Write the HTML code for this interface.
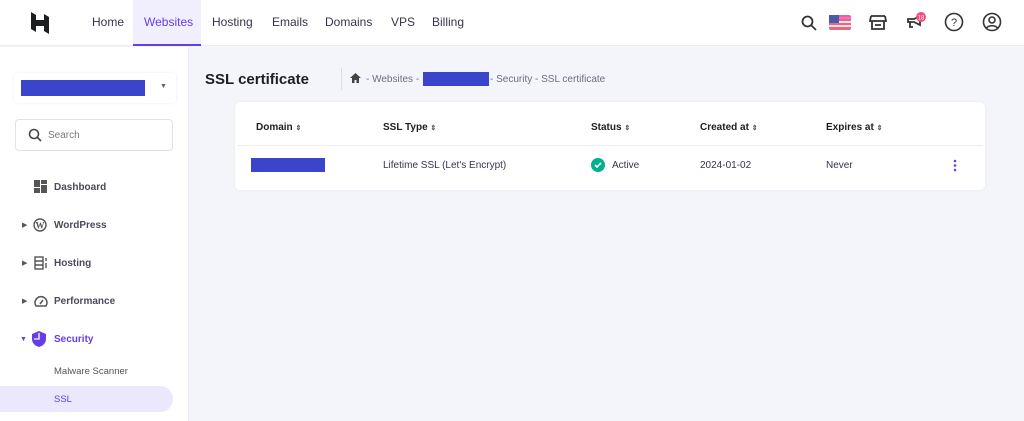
<!DOCTYPE html>
<html><head><style>
*{margin:0;padding:0;box-sizing:border-box}
body{width:1024px;height:421px;overflow:hidden;background:#f4f4fb;font-family:"Liberation Sans",sans-serif;position:relative;color:#2f1c6a}
.abs{position:absolute}
.top{left:0;top:0;width:1024px;height:46px;background:#fff;border-bottom:1px solid #ececf3}
.nav{top:0;height:46px;line-height:45px;font-size:12px;color:#36344d}
.side{left:0;top:47px;width:189px;height:374px;background:#fff;border-right:1px solid #ececf3}
.blue{background:#3b45cc}
.si{font-size:10px;font-weight:bold;color:#4a4a5a}
.th{font-size:10px;font-weight:bold;color:#1d1e20;top:122px}
.td{font-size:10px;color:#36344d;top:160px}
.arr{font-size:7px;color:#555}
</style></head><body>
<div class="abs top"></div>
<div class="abs" style="left:133px;top:0;width:68px;height:46px;background:#f1effd;border-bottom:2px solid #673de6"></div>
<svg class="abs" style="left:30px;top:12px" width="20" height="22" viewBox="0 0 20 22"><path d="M1 0l5 3v5h8V2l5 3v7H6v-1H1zM1 10h13v1h5v11l-5-3v-5H6v6l-5-3z" fill="#1d1e20"/></svg>
<div class="abs nav" style="left:92px">Home</div>
<div class="abs nav" style="left:144px;color:#673de6">Websites</div>
<div class="abs nav" style="left:212px">Hosting</div>
<div class="abs nav" style="left:272px">Emails</div>
<div class="abs nav" style="left:325px">Domains</div>
<div class="abs nav" style="left:391px">VPS</div>
<div class="abs nav" style="left:432px">Billing</div>
<svg class="abs" style="left:801px;top:15px" width="16" height="16"><circle cx="6.5" cy="6.5" r="5" fill="none" stroke="#333" stroke-width="1.8"/><path d="M10 10l5 5" stroke="#333" stroke-width="1.8"/></svg>
<svg class="abs" style="left:829px;top:15px" width="22" height="15"><rect width="22" height="15" rx="2" fill="#e46b7a"/><rect y="2" width="22" height="2" fill="#f6d"/><rect y="6" width="22" height="2" fill="#fde"/><rect y="10" width="22" height="2" fill="#fde"/><rect width="10" height="8" fill="#4d5aa8"/></svg>
<svg class="abs" style="left:869px;top:13px" width="18" height="18" fill="none" stroke="#333" stroke-width="1.8"><path d="M2 3h14M2 3l-1 5h16l-1-5M3 8v8h12V8M6 12h6"/></svg>
<svg class="abs" style="left:906px;top:12px" width="22" height="20"><path d="M2 7h6l6-3v9l-6-3H2zM4 10v5h3" fill="none" stroke="#333" stroke-width="1.8"/><circle cx="15" cy="5" r="5" fill="#f04b7d"/><text x="15" y="7.5" font-size="6" fill="#fff" text-anchor="middle" font-family="Liberation Sans">18</text></svg>
<svg class="abs" style="left:944px;top:12px" width="20" height="20"><circle cx="10" cy="10" r="8.5" fill="none" stroke="#333" stroke-width="1.6"/><text x="10" y="14" font-size="11" text-anchor="middle" fill="#333" font-family="Liberation Sans">?</text></svg>
<svg class="abs" style="left:982px;top:12px" width="20" height="20" fill="none" stroke="#333" stroke-width="1.6"><circle cx="10" cy="10" r="8.5"/><circle cx="10" cy="8" r="3"/><path d="M4.5 16c2-3 9-3 11 0"/></svg>

<div class="abs side"></div>
<div class="abs" style="left:14px;top:73px;width:162px;height:30px;background:#fff;border-radius:4px;box-shadow:0 0 3px rgba(0,0,0,.08)"></div>
<div class="abs blue" style="left:21px;top:80px;width:124px;height:16px"></div>
<div class="abs" style="left:160px;top:83px;font-size:7px;color:#666">▼</div>
<div class="abs" style="left:15px;top:119px;width:158px;height:32px;background:#fff;border:1px solid #e2e2ea;border-radius:4px"></div>
<svg class="abs" style="left:28px;top:128px" width="14" height="14" fill="none" stroke="#444" stroke-width="1.6"><circle cx="6" cy="6" r="4.5"/><path d="M9 9l4 4"/></svg>
<div class="abs" style="left:48px;top:130px;font-size:10px;color:#777">Search</div>

<svg class="abs" style="left:34px;top:180px" width="13" height="13" fill="#555"><rect width="6" height="7"/><rect x="7" width="6" height="4"/><rect y="8" width="6" height="5"/><rect x="7" y="5" width="6" height="8"/></svg>
<div class="abs si" style="left:54px;top:182px">Dashboard</div>
<div class="abs arr" style="left:22px;top:221px">▶</div>
<svg class="abs" style="left:33px;top:218px" width="14" height="14"><circle cx="7" cy="7" r="6" fill="none" stroke="#555" stroke-width="1.4"/><text x="7" y="10.5" font-size="9" font-weight="bold" text-anchor="middle" fill="#555" font-family="Liberation Serif">W</text></svg>
<div class="abs si" style="left:54px;top:220px">WordPress</div>
<div class="abs arr" style="left:22px;top:259px">▶</div>
<svg class="abs" style="left:34px;top:256px" width="14" height="14" fill="none" stroke="#555" stroke-width="1.4"><rect x="1" y="1" width="8" height="12"/><path d="M1 5h8M1 9h8M12 2v3M12 7v5"/></svg>
<div class="abs si" style="left:54px;top:258px">Hosting</div>
<div class="abs arr" style="left:22px;top:297px">▶</div>
<svg class="abs" style="left:33px;top:294px" width="15" height="14" fill="none" stroke="#555" stroke-width="1.5"><path d="M3 12A6 6 0 1 1 13 12z"/><path d="M7 10l3-4"/></svg>
<div class="abs si" style="left:54px;top:296px">Performance</div>
<div class="abs" style="left:20px;top:336px;font-size:7px;color:#673de6">▼</div>
<svg class="abs" style="left:32px;top:331px" width="14" height="16"><path d="M7 0l7 3v5c0 4-3 7-7 8-4-1-7-4-7-8V3z" fill="#673de6"/><path d="M7 2v6H2" stroke="#fff" stroke-width="1.3" fill="none"/></svg>
<div class="abs si" style="left:54px;top:334px;color:#673de6">Security</div>
<div class="abs" style="left:54px;top:366px;font-size:9.5px;color:#555">Malware Scanner</div>
<div class="abs" style="left:0;top:386px;width:173px;height:26px;background:#ebe7fd;border-radius:0 13px 13px 0"></div>
<div class="abs" style="left:54px;top:394px;font-size:9.5px;color:#673de6">SSL</div>

<div class="abs" style="left:205px;top:71px;font-size:15px;font-weight:bold;color:#1d1e20">SSL certificate</div>
<div class="abs" style="left:341px;top:68px;width:1px;height:22px;background:#dcdce5"></div>
<svg class="abs" style="left:350px;top:73px" width="11" height="10" fill="#444"><path d="M5.5 0L11 5H9v5H6.5V7h-2v3H2V5H0z"/></svg>
<div class="abs" style="left:366px;top:74px;font-size:10px;color:#6d6d80">- Websites -</div>
<div class="abs blue" style="left:423px;top:72px;width:66px;height:14px"></div>
<div class="abs" style="left:490px;top:74px;font-size:10px;color:#6d6d80">- Security - SSL certificate</div>

<div class="abs" style="left:235px;top:102px;width:750px;height:88px;background:#fff;border-radius:5px;box-shadow:0 0 3px rgba(0,0,0,.06)"></div>
<div class="abs" style="left:237px;top:145px;width:746px;height:1px;background:#ececf3"></div>
<div class="abs th" style="left:256px">Domain <span class="arr">⇕</span></div>
<div class="abs th" style="left:383px">SSL Type <span class="arr">⇕</span></div>
<div class="abs th" style="left:591px">Status <span class="arr">⇕</span></div>
<div class="abs th" style="left:700px">Created at <span class="arr">⇕</span></div>
<div class="abs th" style="left:826px">Expires at <span class="arr">⇕</span></div>
<div class="abs blue" style="left:251px;top:158px;width:74px;height:14px"></div>
<div class="abs td" style="left:383px">Lifetime SSL (Let's Encrypt)</div>
<svg class="abs" style="left:591px;top:158px" width="14" height="14"><circle cx="7" cy="7" r="7" fill="#00b090"/><path d="M4 7l2 2 4-4" stroke="#fff" stroke-width="1.6" fill="none"/></svg>
<div class="abs td" style="left:612px">Active</div>
<div class="abs td" style="left:700px">2024-01-02</div>
<div class="abs td" style="left:826px">Never</div>
<svg class="abs" style="left:952px;top:159px" width="6" height="13" fill="#673de6"><circle cx="3" cy="2" r="1.3"/><circle cx="3" cy="6.5" r="1.3"/><circle cx="3" cy="11" r="1.3"/></svg>
</body></html>
